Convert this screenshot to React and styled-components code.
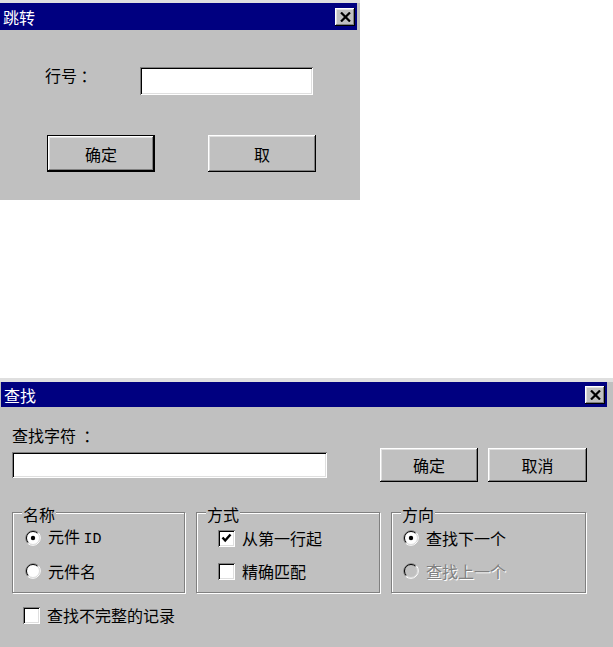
import React from "react";
import styled, { createGlobalStyle } from "styled-components";

//GLOBAL
const GlobalStyle = createGlobalStyle`
  html, body {
    margin: 0;
    background: #fff;
  }
  body {
    font-family: "Noto Sans CJK SC", "Liberation Sans", sans-serif;
    font-size: 16px;
    color: #000;
  }
`;

//ICONS
const CloseIcon = () => (
  <svg width="11" height="10" viewBox="0 0 11 10">
    <path d="M1 0.5L10 9.5M10 0.5L1 9.5" stroke="#000" strokeWidth="2.2" fill="none" />
  </svg>
);

const RadioIcon = ({ checked, disabled }) => (
  <svg width="16" height="16" viewBox="0 0 16 16">
    <circle cx="8" cy="8" r="6.5" fill={disabled ? "#c0c0c0" : "#fff"} />
    <path d="M2.7 13.3A7.5 7.5 0 0 1 13.3 2.7" stroke="#808080" strokeWidth="1" fill="none" />
    <path d="M13.3 2.7A7.5 7.5 0 0 1 2.7 13.3" stroke="#fff" strokeWidth="1" fill="none" />
    <path d="M3.4 12.6A6.5 6.5 0 0 1 12.6 3.4" stroke="#000" strokeWidth="1" fill="none" />
    <path d="M12.6 3.4A6.5 6.5 0 0 1 3.4 12.6" stroke="#dfdfdf" strokeWidth="1" fill="none" />
    {checked && <circle cx="8" cy="8" r="2.2" fill="#000" />}
  </svg>
);

const CheckMark = () => (
  <svg width="11" height="10" viewBox="0 0 11 10">
    <path d="M1.5 4.5L4.2 7.5L9.5 1.5" stroke="#000" strokeWidth="2.4" fill="none" />
  </svg>
);

//SMALL PARTS
const Radio = ({ checked, disabled, children }) => (
  <Option $disabled={disabled}>
    <RadioIcon checked={checked} disabled={disabled} />
    <span>{children}</span>
  </Option>
);

const Check = ({ checked, children }) => (
  <Option>
    <CheckBox>{checked && <CheckMark />}</CheckBox>
    <span>{children}</span>
  </Option>
);

const App = () => {
  return (
    <>
      <GlobalStyle />
      <Page>
        {/* 跳转 */}
        <Dialog $width={360} $height={200} $frame={3} $top={0}>
          <TitleBar $h={27} $left={0} $right={3}>
            <span>跳转</span>
            <CloseButton>
              <CloseIcon />
            </CloseButton>
          </TitleBar>
          <GotoBody>
            <FieldRow>
              <Label $w={95}>行号 ：</Label>
              <TextInput $w={173} $h={28} $offset={2} readOnly value="" />
            </FieldRow>
            <GotoButtons>
              <Button $w={108} $h={37} $default>确定</Button>
              <Button $w={108} $h={37}>取</Button>
            </GotoButtons>
          </GotoBody>
        </Dialog>

        {/* 查找 */}
        <Dialog $width={613} $height={269} $frame={4} $top={178}>
          <TitleBar $h={25} $left={1} $right={6}>
            <span>查找</span>
            <CloseButton>
              <CloseIcon />
            </CloseButton>
          </TitleBar>
          <FindBody>
            <Label>查找字符  ：</Label>
            <InputRow>
              <TextInput $w={315} $h={26} readOnly value="" />
              <FindButtons>
                <Button $w={98} $h={34}>确定</Button>
                <Button $w={99} $h={34}>取消</Button>
              </FindButtons>
            </InputRow>
            <GroupRow>
              <Group $w={173} $indent={12}>
                <Legend>名称</Legend>
                <Radio checked>
                  元件 <Mono>ID</Mono>
                </Radio>
                <Radio>元件名</Radio>
              </Group>
              <Group $w={184} $indent={21}>
                <Legend>方式</Legend>
                <Check checked>从第一行起</Check>
                <Check>精确匹配</Check>
              </Group>
              <Group $w={195} $indent={11}>
                <Legend>方向</Legend>
                <Radio checked>查找下一个</Radio>
                <Radio disabled>查找上一个</Radio>
              </Group>
            </GroupRow>
            <BottomRow>
              <Check>查找不完整的记录</Check>
            </BottomRow>
          </FindBody>
        </Dialog>
      </Page>
    </>
  );
};

//STYLE
const raised = `
  box-shadow: inset -1px -1px #000, inset 1px 1px #fff,
    inset -2px -2px #808080, inset 2px 2px #dfdfdf;
`;

const raisedDefault = `
  box-shadow: inset 0 0 0 1px #000, inset -2px -2px #000, inset 2px 2px #fff,
    inset -3px -3px #808080, inset 3px 3px #dfdfdf;
`;

const sunken = `
  box-shadow: inset 1px 1px #808080, inset -1px -1px #fff,
    inset 2px 2px #000, inset -2px -2px #dfdfdf;
`;

const Page = styled.div`
  width: 613px;
  height: 647px;
  overflow: hidden;
  display: flex;
  flex-direction: column;
  align-items: flex-start;
`;

const Dialog = styled.div`
  box-sizing: border-box;
  width: ${(p) => p.$width}px;
  height: ${(p) => p.$height}px;
  margin-top: ${(p) => p.$top}px;
  flex-shrink: 0;
  background: #c0c0c0;
  border-top: ${(p) => p.$frame}px solid #dfdfdf;
  display: flex;
  flex-direction: column;
`;

const TitleBar = styled.div`
  height: ${(p) => p.$h}px;
  margin: 0 ${(p) => p.$right}px 0 ${(p) => p.$left}px;
  padding-left: 3px;
  background: #000080;
  color: #fff;
  display: flex;
  align-items: center;
  justify-content: space-between;
  line-height: 20px;
`;

const CloseButton = styled.div`
  width: 20px;
  height: 18px;
  margin-right: 2px;
  background: #c0c0c0;
  display: flex;
  align-items: center;
  justify-content: center;
  ${raised}
`;

const GotoBody = styled.div`
  padding: 35px 0 0 45px;
  display: flex;
  flex-direction: column;
`;

const FieldRow = styled.div`
  display: flex;
  align-items: flex-start;
`;

const Label = styled.div`
  width: ${(p) => (p.$w ? `${p.$w}px` : "auto")};
  line-height: 20px;
  white-space: pre;
`;

const Mono = styled.span`
  font-family: "Liberation Mono", "DejaVu Sans Mono", monospace;
  font-size: 15px;
`;

const TextInput = styled.input`
  box-sizing: border-box;
  width: ${(p) => p.$w}px;
  height: ${(p) => p.$h}px;
  margin: ${(p) => p.$offset || 0}px 0 0 0;
  padding: 0;
  border: none;
  outline: none;
  background: #fff;
  ${sunken}
`;

const GotoButtons = styled.div`
  display: flex;
  gap: 53px;
  margin-top: 40px;
  padding-left: 2px;
`;

const Button = styled.div`
  box-sizing: border-box;
  width: ${(p) => p.$w}px;
  height: ${(p) => p.$h}px;
  background: #c0c0c0;
  display: flex;
  align-items: center;
  justify-content: center;
  line-height: 20px;
  ${(p) => (p.$default ? raisedDefault : raised)}
`;

const FindBody = styled.div`
  padding: 18px 26px 0 12px;
  display: flex;
  flex-direction: column;
`;

const InputRow = styled.div`
  margin-top: 3px;
  height: 34px;
  display: flex;
  align-items: center;
`;

const FindButtons = styled.div`
  margin-left: auto;
  display: flex;
  gap: 10px;
`;

const GroupRow = styled.div`
  margin-top: 30px;
  display: flex;
  gap: 11px;
`;

const Group = styled.div`
  position: relative;
  box-sizing: border-box;
  width: ${(p) => p.$w}px;
  height: 81px;
  padding: 15px 0 0 ${(p) => p.$indent}px;
  border: 1px solid #808080;
  box-shadow: inset 1px 1px #fff, 1px 1px #fff;
  display: flex;
  flex-direction: column;
  gap: 13px;
`;

const Legend = styled.span`
  position: absolute;
  top: -9px;
  left: 9px;
  padding: 0 1px;
  background: #c0c0c0;
  line-height: 20px;
`;

const Option = styled.div`
  display: flex;
  align-items: center;
  gap: 7px;
  height: 20px;
  line-height: 20px;
  white-space: pre;
  color: ${(p) => (p.$disabled ? "#808080" : "#000")};
  text-shadow: ${(p) => (p.$disabled ? "1px 1px #fff" : "none")};
`;

const CheckBox = styled.div`
  box-sizing: border-box;
  width: 17px;
  height: 17px;
  background: #fff;
  display: flex;
  align-items: center;
  justify-content: center;
  ${sunken}
`;

const BottomRow = styled.div`
  margin-top: 12px;
  padding-left: 11px;
`;

export default App;
